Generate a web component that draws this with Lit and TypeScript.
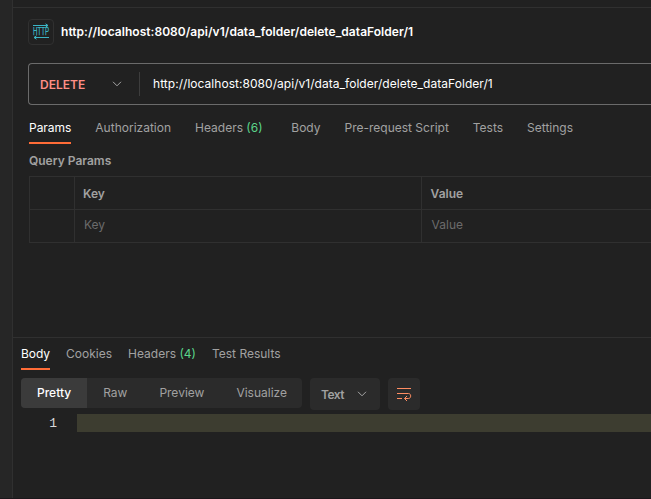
import { LitElement, html, svg, css } from "lit";
import { customElement, property } from "lit/decorators.js";

interface Tab {
  label: string;
  count?: number;
}

const requestTabs: Tab[] = [
  { label: "Params" },
  { label: "Authorization" },
  { label: "Headers", count: 6 },
  { label: "Body" },
  { label: "Pre-request Script" },
  { label: "Tests" },
  { label: "Settings" },
];

const responseTabs: Tab[] = [
  { label: "Body" },
  { label: "Cookies" },
  { label: "Headers", count: 4 },
  { label: "Test Results" },
];

const url = "http://localhost:8080/api/v1/data_folder/delete_dataFolder/1";

const chevron = html`<svg width="10" height="6" viewBox="0 0 10 6" fill="none" stroke="currentColor">
  ${svg`<path d="M1 .8 5 4.8 9 .8" />`}
</svg>`;

@customElement("tab-strip")
export class TabStrip extends LitElement {
  @property({ attribute: false }) tabs: Tab[] = [];

  static styles = css`
    :host {
      display: flex;
      gap: var(--tab-gap, 24px);
      height: 32px;
      white-space: nowrap;
      color: #a1a1a1;
    }
    .tab {
      box-sizing: border-box;
      height: 32px;
      line-height: 16px;
      padding-top: var(--tab-pad, 8px);
      border-bottom: 2px solid transparent;
    }
    .tab.active {
      color: #fff;
      border-color: #ff6c37;
      letter-spacing: -0.03px;
    }
    .tab.counted {
      padding-right: var(--count-pad, 0);
    }
    .count {
      color: #5bd68a;
    }
  `;

  render() {
    return this.tabs.map(
      (t, i) => html`<div class="tab ${i === 0 ? "active" : ""} ${t.count ? "counted" : ""}">${t.label}${t.count
        ? html` <span class="count">(${t.count})</span>`
        : ""}</div>`
    );
  }
}

@customElement("app-root")
export class AppRoot extends LitElement {
  static styles = css`
    :host {
      display: flex;
      box-sizing: border-box;
      width: 651px;
      height: 499px;
      overflow: hidden;
      background: #212121;
      border-bottom: 1px solid #1b171b;
      color: #a1a1a1;
      font: 12px/16px Inter, sans-serif;
    }
    * {
      box-sizing: border-box;
    }
    svg {
      display: block;
      flex: none;
    }
    .rail {
      flex: none;
      width: 13px;
      background: #262626;
      border-right: 1px solid #303030;
    }
    .main {
      flex: 1;
      min-width: 0;
      padding-top: 7px;
    }
    .request {
      height: 330px;
      border-top: 1px solid #303030;
      padding: 11px 0 0 15px;
    }
    .title {
      display: flex;
      align-items: center;
      gap: 7px;
      height: 26px;
      color: #fff;
      font-weight: 600;
      letter-spacing: 0.04px;
    }
    .badge {
      display: flex;
      align-items: center;
      justify-content: center;
      width: 26px;
      height: 26px;
      border: 1px solid #303030;
      border-radius: 4px;
    }
    .badge svg {
      overflow: visible;
    }
    .badge text {
      font: 10px "Liberation Sans", sans-serif;
      letter-spacing: 0;
    }
    .url-bar {
      display: flex;
      align-items: center;
      height: 42px;
      margin-top: 18px;
      border: 1px solid #6b6b6b;
      border-right: 0;
      border-radius: 4px 0 0 4px;
      color: #fff;
    }
    .method {
      display: flex;
      align-items: center;
      justify-content: space-between;
      width: 111px;
      height: 24px;
      padding: 0 17px 0 11px;
      border-right: 1px solid #3d3d3d;
      color: #ff8e86;
      font-weight: 600;
    }
    .method span,
    .select span {
      padding-top: 2px;
    }
    .method svg,
    .select svg {
      color: #a6a6a6;
    }
    .url {
      padding-left: 13px;
      letter-spacing: 0.04px;
    }
    .request tab-strip {
      --count-pad: 4.7px;
      margin: 7px 0 0 1px;
    }
    .section {
      margin: 9px 0 7px 1px;
      font-weight: 600;
    }
    .table {
      display: grid;
      grid-template-columns: 45px 347px 1fr;
      grid-auto-rows: 33px;
      margin-left: 1px;
      border-top: 1px solid #303030;
      border-left: 1px solid #303030;
    }
    .cell {
      padding: 9px 0 0 8px;
      border-right: 1px solid #303030;
      border-bottom: 1px solid #303030;
    }
    .head {
      font-weight: 600;
    }
    .hint {
      padding: 7px 0 0 9px;
      color: #6b6b6b;
    }
    .cell:nth-child(3n) {
      border-right: 0;
      text-indent: 0.6px;
    }
    .response {
      border-top: 1px solid #303030;
    }
    .response tab-strip {
      --tab-gap: 16px;
      margin-left: 8px;
    }
    .tools {
      display: flex;
      gap: 8px;
      padding: 8px 0 0 8px;
      height: 44px;
    }
    .segments {
      display: flex;
      width: 281px;
      height: 30px;
      border-radius: 4px;
      overflow: hidden;
      background: #2b2b2b;
    }
    .segment {
      padding: 7px 16px;
    }
    .segment.active {
      background: #3b3b3b;
      color: #fff;
      font-weight: 500;
    }
    .select {
      display: flex;
      align-items: center;
      justify-content: space-between;
      width: 70px;
      height: 32px;
      padding: 0 13px 0 11px;
      border-radius: 4px;
      background: #2b2b2b;
      font-weight: 600;
      letter-spacing: -0.5px;
    }
    .wrap {
      display: flex;
      align-items: center;
      justify-content: center;
      width: 32px;
      height: 32px;
      border-radius: 4px;
      background: #2b2b2b;
    }
    .line {
      display: flex;
      height: 18px;
    }
    .number {
      width: 64px;
      padding: 1px 20px 0 0;
      text-align: right;
      color: #d8d8d8;
      font: 13px/18px "Liberation Mono", monospace;
    }
    .code {
      flex: 1;
      background: #3d3d30;
    }
  `;

  render() {
    return html`
      <div class="rail"></div>
      <div class="main">
        <div class="request">
          <div class="title">
            <div class="badge">
              <svg width="18" height="18" viewBox="0 0 18 18" fill="none" stroke="#3bb5c5">
                <path d="M1 2.5H16M13.5 .8 16 2.5 13.5 4.2M2 14.5H17M4.5 12.8 2 14.5 4.5 16.2" />
                <text x="1" y="12" textLength="16" lengthAdjust="spacingAndGlyphs" fill="#3bb5c5" stroke="#3bb5c5" stroke-width=".25">HTTP</text>
              </svg>
            </div>
            <span>${url}</span>
          </div>
          <div class="url-bar">
            <div class="method"><span>DELETE</span>${chevron}</div>
            <div class="url">${url}</div>
          </div>
          <tab-strip .tabs=${requestTabs}></tab-strip>
          <div class="section">Query Params</div>
          <div class="table">
            <div class="cell"></div>
            <div class="cell head">Key</div>
            <div class="cell head">Value</div>
            <div class="cell"></div>
            <div class="cell hint">Key</div>
            <div class="cell hint">Value</div>
          </div>
        </div>
        <div class="response">
          <tab-strip .tabs=${responseTabs}></tab-strip>
          <div class="tools">
            <div class="segments">
              <div class="segment active">Pretty</div>
              <div class="segment">Raw</div>
              <div class="segment">Preview</div>
              <div class="segment">Visualize</div>
            </div>
            <div class="select"><span>Text</span>${chevron}</div>
            <div class="wrap">
              <svg width="16" height="16" viewBox="0 0 16 16" fill="none" stroke="#ff8d62">
                <path d="M1 2.5H15M1 7.5H12.5C15.4 7.5 15.4 12.5 12.5 12.5H8.5M1 12.5H6M11 10 8.5 12.5 11 15" />
              </svg>
            </div>
          </div>
          <div class="line">
            <div class="number">1</div>
            <div class="code"></div>
          </div>
        </div>
      </div>
    `;
  }
}
